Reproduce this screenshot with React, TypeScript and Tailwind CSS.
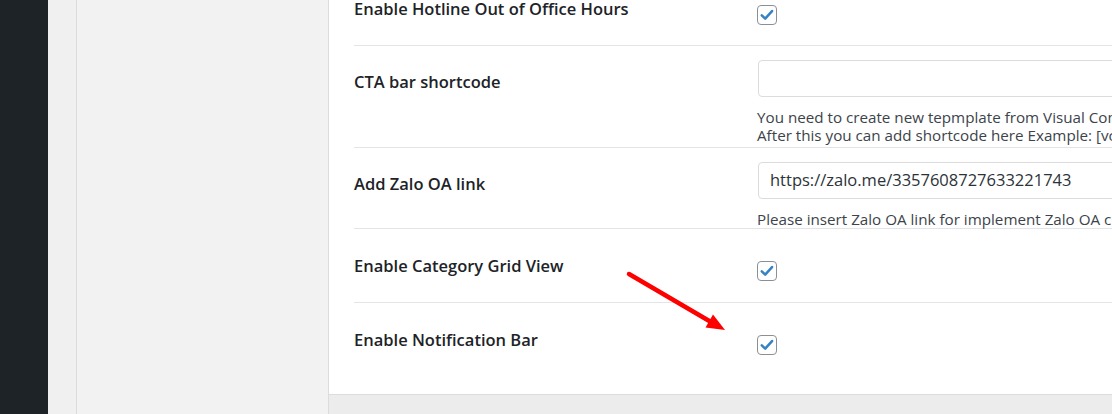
import React from 'react'

function Checkbox() {
  return (
    <span className="flex h-[20px] w-[20px] items-center justify-center rounded-[4px] border border-[#8c8f94] bg-white">
      <svg viewBox="0 0 20 20" className="h-[18px] w-[18px]">
        <path
          d="M4.2 10.4 L8 14 L15.6 5.6"
          fill="none"
          stroke="#3582c4"
          strokeWidth="2.8"
          strokeLinecap="round"
          strokeLinejoin="round"
        />
      </svg>
    </span>
  )
}

const label = 'w-[403px] shrink-0 text-[16.5px] leading-[24px] font-semibold text-[#1d2327]'
const desc = 'text-[15.2px] leading-[18px] text-[#3c434a] whitespace-nowrap'

export default function App() {
  return (
    <div
      className="relative flex h-[414px] w-[1112px] overflow-hidden bg-[#f0f0f1]"
      style={{ fontFamily: '"Open Sans", "Noto Sans", sans-serif' }}
    >
      {/* admin sidebar */}
      <div className="w-[48px] shrink-0 bg-[#1d2327]" />

      <div className="flex flex-1 pl-[28px]">
        {/* settings tabs column */}
        <div className="w-[253px] shrink-0 border-x border-[#dcdcde] bg-[#f2f2f2]" />

        <div className="flex min-w-0 flex-1 flex-col">
          <div className="h-[394px] overflow-hidden bg-white pl-[25px]">
            {/* Hotline */}
            <div className="-mt-[28px] flex border-b border-[#e2e4e7]">
              <div className={`${label} pt-[25px] pb-[24px]`}>Enable Hotline Out of Office Hours</div>
              <div className="pt-[33px]">
                <Checkbox />
              </div>
            </div>

            {/* CTA bar */}
            <div className="flex border-b border-[#e2e4e7]">
              <div className={`${label} pt-[24px]`}>CTA bar shortcode</div>
              <div className="min-w-0 flex-1 pt-[14px] pb-[3px]">
                <div className="ml-px h-[37px] w-[420px] rounded-[4px] border border-[#dcdcde] bg-white" />
                <div className={`${desc} mt-[11px]`}>
                  You need to create new tepmplate from Visual Composer Templates
                  <br />
                  After this you can add shortcode here Example: [vc_template id="123"]
                </div>
              </div>
            </div>

            {/* Zalo */}
            <div className="flex border-b border-[#e2e4e7]">
              <div className={`${label} pt-[24px]`}>Add Zalo OA link</div>
              <div className="min-w-0 flex-1 pt-[14px]">
                <div className="ml-px flex h-[37px] w-[420px] items-center rounded-[4px] border border-[#dcdcde] bg-white pl-[11px] text-[16.5px] text-[#2c3338]">
                  https://zalo.me/3357608727633221743
                </div>
                <div className={`${desc} mt-[11px]`}>Please insert Zalo OA link for implement Zalo OA chat</div>
              </div>
            </div>

            {/* Category grid */}
            <div className="flex border-b border-[#e2e4e7]">
              <div className={`${label} pt-[25px] pb-[24px]`}>Enable Category Grid View</div>
              <div className="pt-[32px]">
                <Checkbox />
              </div>
            </div>

            {/* Notification bar */}
            <div className="flex">
              <div className={`${label} pt-[25px]`}>Enable Notification Bar</div>
              <div className="pt-[32px]">
                <Checkbox />
              </div>
            </div>
          </div>
          <div className="flex-1 border-t border-[#dcdcde] bg-[#ececec]" />
        </div>
      </div>

      {/* annotation arrow */}
      <svg className="pointer-events-none absolute left-0 top-0" width="1112" height="414">
        <line x1="629" y1="274" x2="711" y2="322" stroke="#ff0000" strokeWidth="4.5" strokeLinecap="round" />
        <polygon points="725,330 705.5,327.5 713,314.5" fill="#ff0000" />
      </svg>
    </div>
  )
}
